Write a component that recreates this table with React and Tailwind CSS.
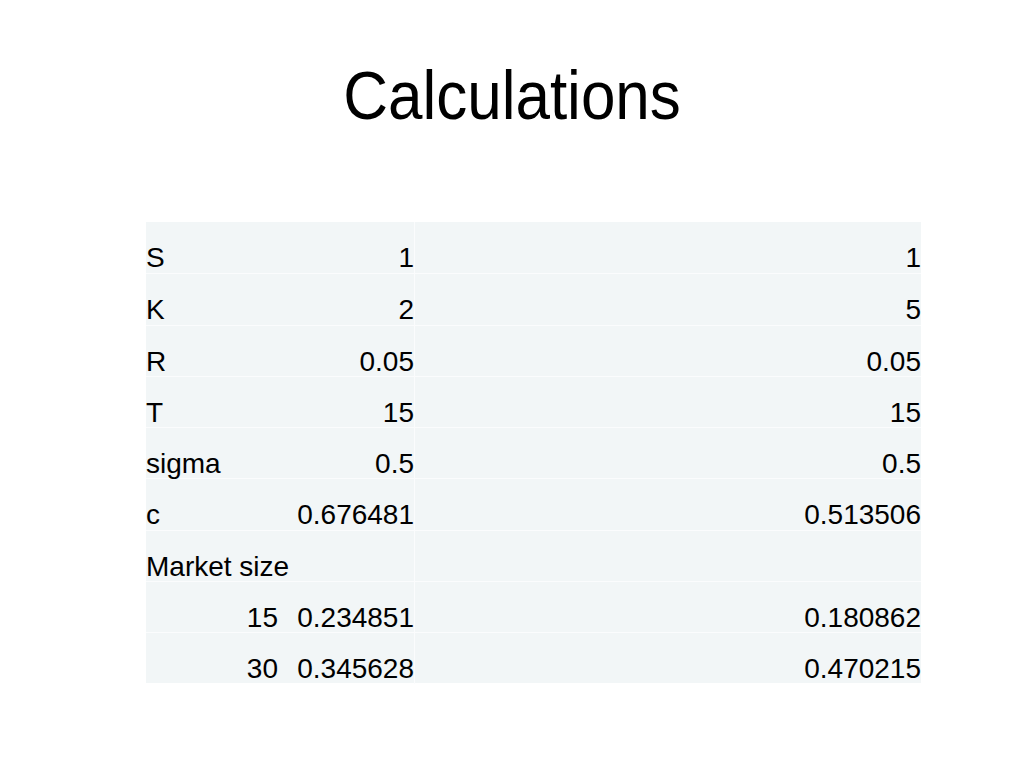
import React from 'react';

const rows = [
  ['S', '1', '1'],
  ['K', '2', '5'],
  ['R', '0.05', '0.05'],
  ['T', '15', '15'],
  ['sigma', '0.5', '0.5'],
  ['c', '0.676481', '0.513506'],
  ['Market size', '', ''],
  ['15', '0.234851', '0.180862', true],
  ['30', '0.345628', '0.470215', true],
];

export default function App() {
  return (
    <div className="w-[1024px] h-[768px] bg-white text-black font-['Liberation_Sans',Arial,sans-serif]">
      {/* Title */}
      <div className="pt-[61px] h-[222px] flex justify-center">
        <h1 className="text-[62px] leading-[78px] scale-y-110">Calculations</h1>
      </div>

      {/* Table */}
      <div className="ml-[146px] w-[775px] bg-[#f2f6f7]">
        {rows.map(([label, a, b, numeric], i) => (
          <div
            key={i}
            className={`grid grid-cols-[139px_130px_506px] h-[51.25px] text-[28px] leading-[30px] ${i > 0 ? 'border-t border-[#fbfcfd]' : ''}`}
          >
            {label === 'Market size' ? (
              <div className="col-span-2 pt-[21px] whitespace-nowrap border-r border-[#fbfcfd]">{label}</div>
            ) : (
              <>
                <div className={`pt-[21px] whitespace-nowrap ${numeric ? 'text-right pr-[7px]' : ''}`}>{label}</div>
                <div className="pt-[21px] text-right border-r border-[#fbfcfd]">{a}</div>
              </>
            )}
            <div className="pt-[21px] text-right">{b}</div>
          </div>
        ))}
      </div>
    </div>
  );
}
